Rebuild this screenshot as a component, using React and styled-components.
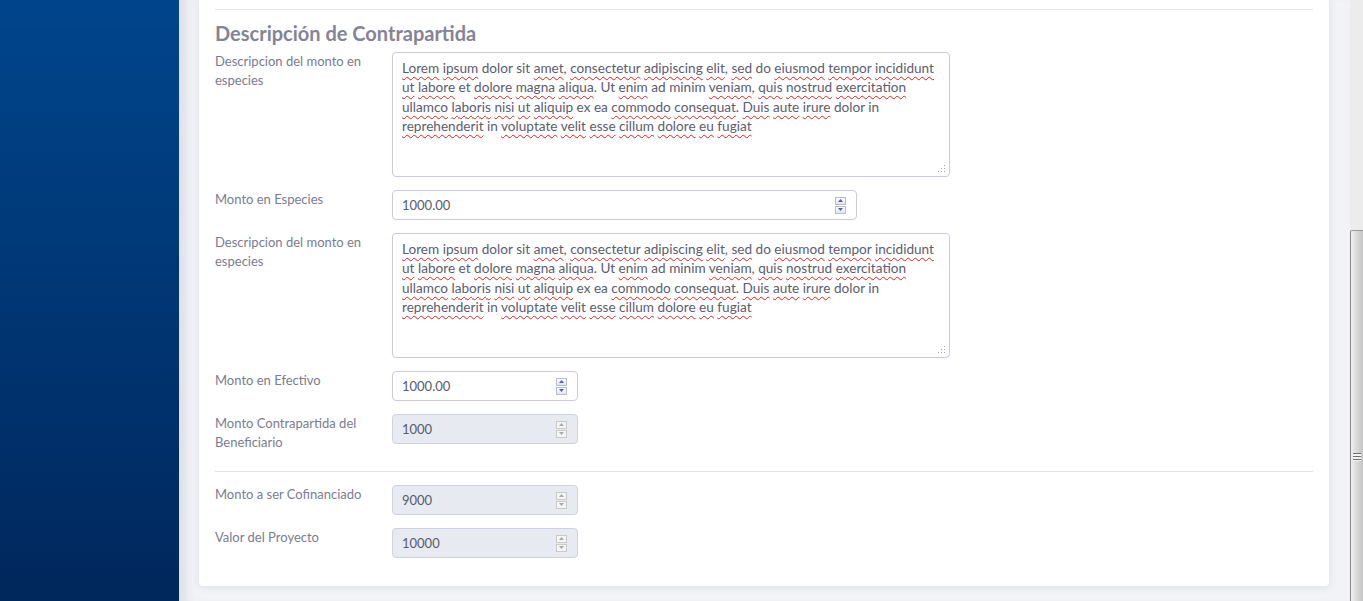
import React from "react";
import styled, { createGlobalStyle } from "styled-components";

const GlobalStyle = createGlobalStyle`
  html, body {
    margin: 0;
    height: 100%;
    overflow: hidden;
    font-family: Lato, "Liberation Sans", sans-serif;
  }
`;

const Shell = styled.div`
  display: flex;
  height: 100vh;
  overflow: hidden;
`;

const Sidebar = styled.aside`
  width: 179px;
  flex-shrink: 0;
  background: linear-gradient(180deg, #00458c 0%, #003674 50%, #00275c 100%);
`;

const Main = styled.main`
  flex: 1;
  display: flex;
  flex-direction: column;
  padding: 0 21px 15px 20px;
  background: #f2f3f7;
  box-shadow: inset 14px 0 14px -10px rgba(40, 50, 90, 0.14);
  overflow: hidden;
`;

const Card = styled.section`
  background: #fff;
  border-radius: 0 0 4px 4px;
  box-shadow: 0 1px 8px rgba(40, 50, 90, 0.1);
  padding: 9px 16px 28px;
`;

const Divider = styled.hr`
  border: 0;
  border-top: 1px solid #e4e5ea;
  margin: ${(p) => p.$margin || "0"};
`;

const Heading = styled.h3`
  margin: 11px 0 7px;
  font-size: 20px;
  line-height: 24px;
  font-weight: 700;
  color: #838496;
`;

const Group = styled.div`
  display: flex;
  flex-direction: column;
  gap: 13px;
`;

const Row = styled.div`
  display: grid;
  grid-template-columns: 177px 1fr;
  align-items: start;
`;

const Label = styled.label`
  font-size: 13px;
  line-height: 19px;
  color: #7a7c8f;
  padding-right: 12px;
`;

const TextBox = styled.div`
  position: relative;
  box-sizing: border-box;
  width: 558px;
  height: 125px;
  padding: 6px 9px;
  border: 1px solid #cbcbdf;
  border-radius: 4px;
  font-size: 13.6px;
  line-height: 19.4px;
  color: #5a5d70;
`;

const Typo = styled.span`
  text-decoration: underline wavy #e0201c;
  text-decoration-thickness: 1px;
  text-underline-offset: 3px;
`;

const Grip = styled.svg`
  position: absolute;
  right: 3px;
  bottom: 3px;
`;

const NumberBox = styled.div`
  box-sizing: border-box;
  width: ${(p) => p.$width}px;
  height: 30px;
  display: flex;
  align-items: center;
  justify-content: space-between;
  padding: 0 10px 0 9px;
  border: 1px solid ${(p) => (p.$disabled ? "#cfd1df" : "#cbcbdf")};
  border-radius: 4px;
  background: ${(p) => (p.$disabled ? "#e8eaf2" : "#fff")};
  font-size: 13px;
  color: #575a6b;
`;

const Spin = styled.div`
  display: flex;
  flex-direction: column;
  gap: 1px;
  width: 11px;
`;

const SpinHalf = styled.div`
  box-sizing: border-box;
  height: 8px;
  display: flex;
  align-items: center;
  justify-content: center;
  border: 1px solid ${(p) => (p.$disabled ? "#c9c9cc" : "#b9bccd")};
  background: ${(p) =>
    p.$disabled ? "#f5f5f6" : "linear-gradient(#fbfbfd, #e4e6ee)"};
`;

const Scrollbar = styled.div`
  width: 13px;
  flex-shrink: 0;
  display: flex;
  flex-direction: column;
  background: #ececec;
`;

const Track = styled.div`
  height: 230px;
`;

const Thumb = styled.div`
  flex: 1;
  border-left: 1px solid #858585;
  border-top: 1px solid #9a9a9a;
  border-top-left-radius: 2px;
  background: linear-gradient(90deg, #f1f1f1, #d8d8d8 50%, #c4c4c4);
  padding-top: 222px;
  display: flex;
  justify-content: center;
`;

const GripLines = styled.div`
  width: 8px;
  height: 8px;
  background: repeating-linear-gradient(
    180deg,
    #6f6f6f 0 1px,
    #f4f4f4 1px 3px
  );
`;

const Triangle = ({ up, color }) => (
  <svg width="5" height="3" viewBox="0 0 5 3">
    <polygon points={up ? "2.5,0 5,3 0,3" : "0,0 5,0 2.5,3"} fill={color} />
  </svg>
);

const Spinner = ({ disabled }) => {
  const color = disabled ? "#a9a9ad" : "#4f5fa8";
  return (
    <Spin>
      <SpinHalf $disabled={disabled}>
        <Triangle up color={color} />
      </SpinHalf>
      <SpinHalf $disabled={disabled}>
        <Triangle color={color} />
      </SpinHalf>
    </Spin>
  );
};

const NumberField = ({ value, width = 186, disabled }) => (
  <NumberBox $width={width} $disabled={disabled}>
    <span>{value}</span>
    <Spinner disabled={disabled} />
  </NumberBox>
);

// words the spell checker flags get the red wavy line
const flagged = new Set([
  "Lorem", "ipsum", "amet", "consectetur", "adipiscing", "elit", "sed",
  "eiusmod", "tempor", "incididunt", "ut", "labore", "dolore", "magna",
  "aliqua", "enim", "veniam", "quis", "nostrud", "exercitation", "ullamco",
  "laboris", "nisi", "aliquip", "commodo", "consequat", "Duis", "aute",
  "irure", "reprehenderit", "voluptate", "velit", "esse", "cillum", "eu",
  "fugiat",
]);

const lorem =
  "Lorem ipsum dolor sit amet, consectetur adipiscing elit, sed do eiusmod tempor incididunt ut labore et dolore magna aliqua. Ut enim ad minim veniam, quis nostrud exercitation ullamco laboris nisi ut aliquip ex ea commodo consequat. Duis aute irure dolor in reprehenderit in voluptate velit esse cillum dolore eu fugiat";

const SpellText = ({ text }) =>
  text.split(/(\s+)/).map((chunk, i) => {
    const m = chunk.match(/^([A-Za-z]+)(.*)$/);
    if (m && flagged.has(m[1])) {
      return (
        <React.Fragment key={i}>
          <Typo>{m[1]}</Typo>
          {m[2]}
        </React.Fragment>
      );
    }
    return <React.Fragment key={i}>{chunk}</React.Fragment>;
  });

const TextArea = ({ text }) => (
  <TextBox>
    <SpellText text={text} />
    <Grip width="8" height="8" viewBox="0 0 8 8">
      <g fill="#a3a3b3">
        <rect x="6" y="0" width="1" height="1" />
        <rect x="3" y="3" width="1" height="1" />
        <rect x="6" y="3" width="1" height="1" />
        <rect x="0" y="6" width="1" height="1" />
        <rect x="3" y="6" width="1" height="1" />
        <rect x="6" y="6" width="1" height="1" />
      </g>
    </Grip>
  </TextBox>
);

const App = () => {
  return (
    <Shell>
      <GlobalStyle />
      <Sidebar />
      <Main>
        <Card>
          <Divider />
          <Heading>Descripción de Contrapartida</Heading>
          <Group>
            <Row>
              <Label>Descripcion del monto en especies</Label>
              <TextArea text={lorem} />
            </Row>
            <Row>
              <Label>Monto en Especies</Label>
              <NumberField value="1000.00" width={465} />
            </Row>
            <Row>
              <Label>Descripcion del monto en especies</Label>
              <TextArea text={lorem} />
            </Row>
            <Row>
              <Label>Monto en Efectivo</Label>
              <NumberField value="1000.00" />
            </Row>
            <Row>
              <Label>Monto Contrapartida del Beneficiario</Label>
              <NumberField value="1000" disabled />
            </Row>
          </Group>
          <Divider $margin="19px 0 13px" />
          <Group>
            <Row>
              <Label>Monto a ser Cofinanciado</Label>
              <NumberField value="9000" disabled />
            </Row>
            <Row>
              <Label>Valor del Proyecto</Label>
              <NumberField value="10000" disabled />
            </Row>
          </Group>
        </Card>
      </Main>
      <Scrollbar>
        <Track />
        <Thumb>
          <GripLines />
        </Thumb>
      </Scrollbar>
    </Shell>
  );
};

export default App;
